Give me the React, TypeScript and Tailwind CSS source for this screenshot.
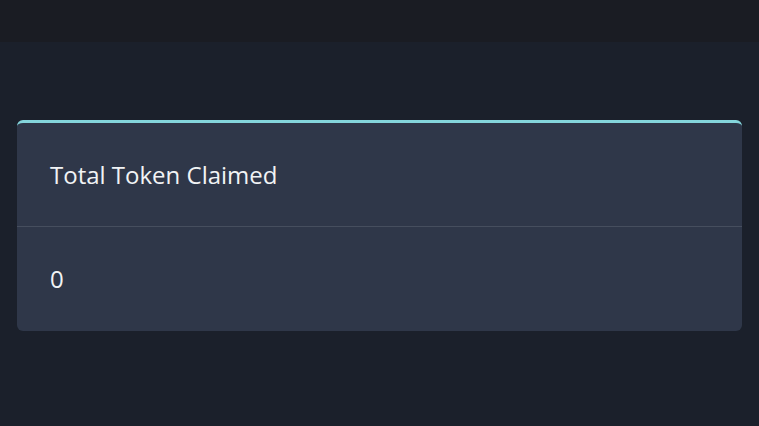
const App = () => {
  return (
    <div className="min-h-[426px] w-full bg-[#1b202b] font-['Open_Sans',sans-serif]">
      <div className="h-[42px] bg-[#1a1c23]" />
      <div className="px-[17px] pt-[78px]">
        <div className="rounded-md border-t-[3px] border-[#84d5dc] bg-[#2f3749] text-[#f1f3f5]">
          <div className="flex h-[104px] items-center border-b border-[#464e5e] px-[33px] text-[24px]">
            Total Token Claimed
          </div>
          <div className="flex h-[104px] items-center px-[33px] text-[24px]">0</div>
        </div>
      </div>
    </div>
  );
};

export default App;
